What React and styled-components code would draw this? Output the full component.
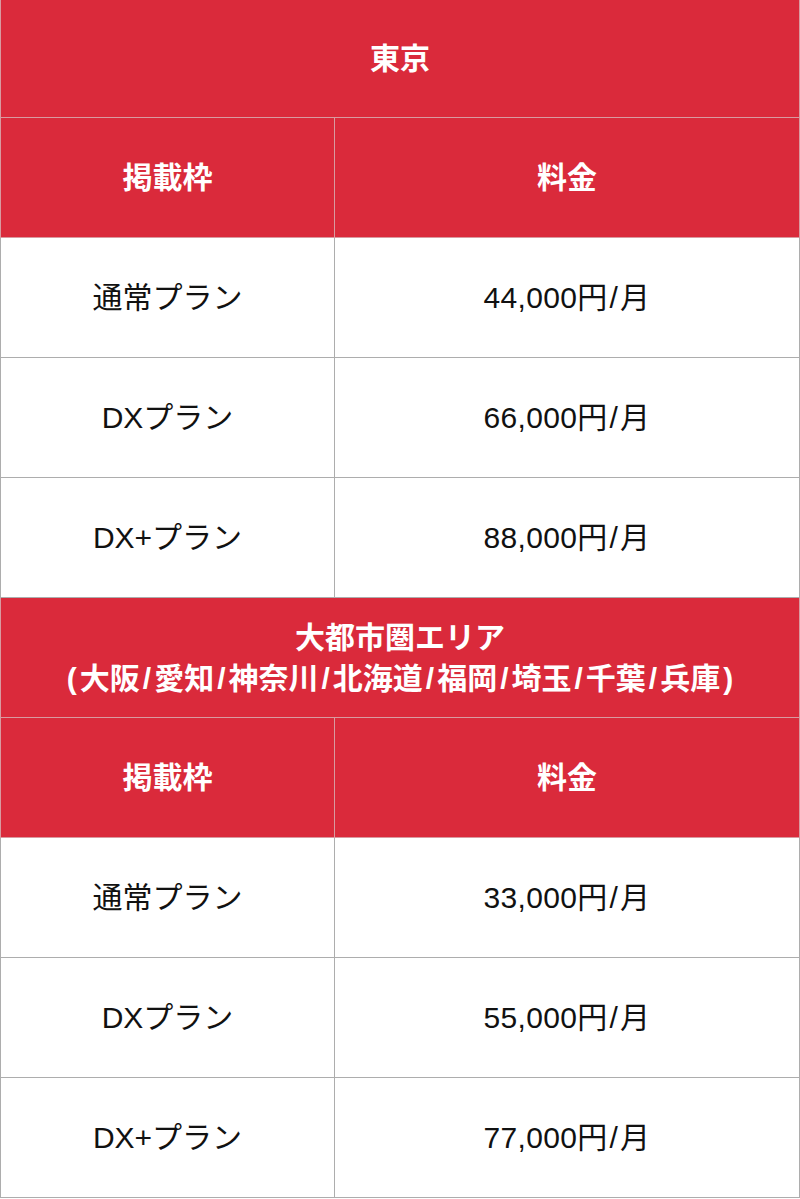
import React from 'react';
import styled, { createGlobalStyle } from 'styled-components';

const Global = createGlobalStyle`
  body {
    margin: 0;
    background: #fff;
    font-family: "Liberation Sans", "Noto Sans CJK JP", sans-serif;
  }
`;

const Table = styled.table`
  width: 800px;
  border-collapse: collapse;
  table-layout: fixed;
  border-top: hidden;
  color: #000;
`;

const Cell = styled.td`
  height: ${p => (p.$first ? 117 : 119)}px;
  padding: 0;
  border: 1px solid #adadad;
  text-align: center;
  vertical-align: middle;
  font-size: 30px;
  line-height: 41px;
  background: ${p => (p.$head ? '#da2a3b' : '#fff')};
  color: ${p => (p.$head ? '#fff' : '#111')};
  font-weight: ${p => (p.$head ? 700 : 400)};
  letter-spacing: ${p => (p.$price ? '0.3px' : '0')};
  border-color: ${p => (p.$head ? '#d89aa0' : '#adadad')};
`;

const Punct = styled.span`
  margin: 0 ${p => (p.$wide ? 3 : 2)}px;
`;

// slashes and brackets sit with a little air around them in the original
const spaced = (text, wide) =>
  text.split(/([/()])/).map((part, i) =>
    /^[/()]$/.test(part) ? (
      <Punct key={i} $wide={wide}>
        {part}
      </Punct>
    ) : (
      part
    )
  );

const sections = [
  {
    title: ['東京'],
    rows: [
      ['通常プラン', '44,000円/月'],
      ['DXプラン', '66,000円/月'],
      ['DX+プラン', '88,000円/月'],
    ],
  },
  {
    title: ['大都市圏エリア', '(大阪/愛知/神奈川/北海道/福岡/埼玉/千葉/兵庫)'],
    rows: [
      ['通常プラン', '33,000円/月'],
      ['DXプラン', '55,000円/月'],
      ['DX+プラン', '77,000円/月'],
    ],
  },
];

export default function App() {
  return (
    <>
      <Global />
      <Table>
        <colgroup>
          <col style={{ width: 334 }} />
          <col />
        </colgroup>
        <tbody>
          {sections.map((s, i) => (
            <React.Fragment key={i}>
              <tr>
                <Cell $head $first={i === 0} colSpan={2}>
                  {s.title.map((t, j) => (
                    <div key={j}>{spaced(t, true)}</div>
                  ))}
                </Cell>
              </tr>
              <tr>
                <Cell $head>掲載枠</Cell>
                <Cell $head>料金</Cell>
              </tr>
              {s.rows.map(r => (
                <tr key={r[0]}>
                  <Cell>{r[0]}</Cell>
                  <Cell $price>{spaced(r[1])}</Cell>
                </tr>
              ))}
            </React.Fragment>
          ))}
        </tbody>
      </Table>
    </>
  );
}
